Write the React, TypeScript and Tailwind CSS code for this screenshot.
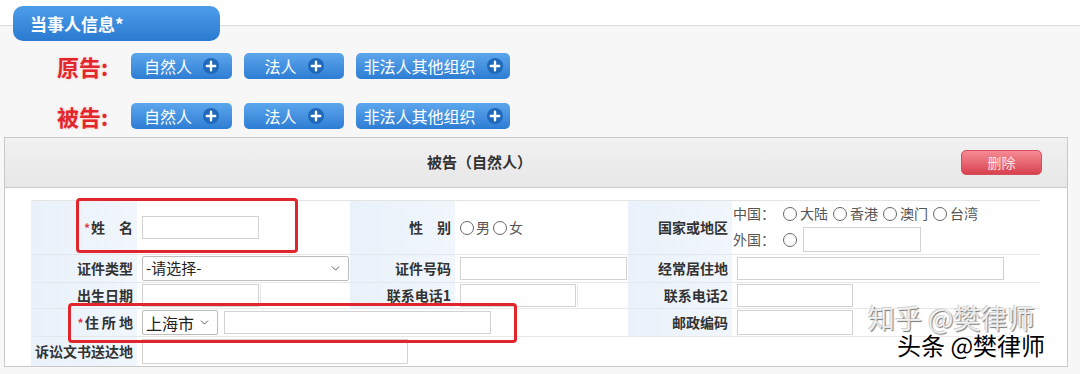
import { ChevronDown } from "lucide-react";

const FONT = "font-['Noto_Sans_CJK_SC','Noto_Sans',sans-serif]";

function PlusDot() {
  return (
    <svg width="16" height="16" viewBox="0 0 16 16" className="shrink-0">
      <circle cx="8" cy="8" r="8" fill="#1f68ba" />
      <path d="M8 3.8v8.4M3.8 8h8.4" stroke="#fff" strokeWidth="2.4" strokeLinecap="round" />
    </svg>
  );
}

function AddButton({ label, width }: { label: string; width: string }) {
  return (
    <div
      className={`${width} flex h-[26px] items-center justify-center gap-[11px] rounded-[5px] bg-gradient-to-b from-[#5ca6ec] to-[#2d7dd4] text-[16px] text-white`}
    >
      <span>{label}</span>
      <PlusDot />
    </div>
  );
}

function PartyRow({ title }: { title: string }) {
  return (
    <div className="flex h-[26px] items-center">
      <div className="ml-[57px] w-[74px] text-[22px] font-bold leading-none text-[#e3262c] [text-shadow:0_0_3px_#f6c4c4]">
        {title}
      </div>
      <div className="flex gap-[12px]">
        <AddButton label="自然人" width="w-[101px]" />
        <AddButton label="法人" width="w-[100px]" />
        <AddButton label="非法人其他组织" width="w-[154px]" />
      </div>
    </div>
  );
}

function Label({ children, last }: { children: React.ReactNode; last?: boolean }) {
  return (
    <div
      className={`flex items-center justify-end border-b border-[#e4e8ee] bg-gradient-to-r from-[#e9f1fa] to-[#f1f6fc] pr-[4px] text-[14px] font-bold text-[#333] ${last ? "border-b-0" : ""}`}
    >
      {children}
    </div>
  );
}

function Cell({ children, span, last }: { children?: React.ReactNode; span?: string; last?: boolean }) {
  return (
    <div className={`flex items-center gap-[1px] border-b border-[#e8e8e8] pl-[5px] ${span ?? ""} ${last ? "border-b-0" : ""}`}>
      {children}
    </div>
  );
}

function Input({ width, height = "h-[23px]" }: { width: string; height?: string }) {
  return <div className={`${width} ${height} border border-[#d2d2d2] bg-white`} />;
}

function Ghost({ width }: { width: string }) {
  return <div className={`${width} h-[23px] border-l border-[#e6e6e6]`} />;
}

function Radio({ text, wide }: { text?: string; wide?: boolean }) {
  return (
    <span className={`flex items-center ${wide ? "gap-[3px]" : "gap-[2px]"}`}>
      <span className="h-[14px] w-[14px] rounded-full border border-[#666] bg-white" />
      {text && <span className={wide ? "mr-[5px]" : "mr-[2px]"}>{text}</span>}
    </span>
  );
}

function Select({ text, width, textSize }: { text: string; width: string; textSize: string }) {
  return (
    <div
      className={`${width} flex h-[25px] items-center justify-between rounded-[2px] border border-[#bdbdbd] bg-white pl-[3px] pr-[6px] ${textSize} text-[#222]`}
    >
      <span>{text}</span>
      <ChevronDown size={13} strokeWidth={1.6} color="#444" />
    </div>
  );
}

const Star = () => <span className="mr-[1px] text-[12px] text-[#e0394a]">*</span>;

export default function App() {
  return (
    <div className={`relative h-[374px] w-[1080px] overflow-hidden bg-[#f7f7f7] ${FONT}`}>
      <div className="h-[26px] border-b border-[#dcdcdc] bg-white pl-[13px] pt-[6px]">
        <div className="relative z-10 flex h-[35px] w-[207px] items-center rounded-[10px] bg-gradient-to-b from-[#4c9de8] to-[#2a7bd1] pl-[17px] text-[17px] font-bold text-white">
          当事人信息*
        </div>
      </div>

      <div className="mt-[27px] flex flex-col gap-[24px]">
        <PartyRow title="原告:" />
        <PartyRow title="被告:" />
      </div>

      <div className="ml-[4px] mt-[8px] w-[1064px] border border-[#c9c9c9] bg-white">
        <div className="flex h-[50px] items-center border-b border-[#c9c9c9] bg-gradient-to-b from-[#f1f1f1] to-[#e7e7e7]">
          <div className="pl-[422px] text-[15px] font-bold text-[#333]">被告（自然人）</div>
          <div className="ml-auto mr-[25px] flex h-[25px] w-[81px] items-center justify-center rounded-[5px] border border-[#d3505c] bg-gradient-to-b from-[#f58a95] to-[#d8404f] text-[14px] text-[#fde4e8]">
            删除
          </div>
        </div>

        <div className="pl-[26px] pt-[12px]">
          <div className="grid w-[1009px] grid-cols-[106px_213px_105px_173px_104px_308px] grid-rows-[54px_28px_26px_28px_29px] border-t border-[#e4e4e4] text-[14px] text-[#555]">
            {/* row 1 */}
            <Label>
              <Star />
              姓　名
            </Label>
            <Cell>
              <Input width="w-[117px]" />
            </Cell>
            <Label>性　别</Label>
            <Cell>
              <Radio text="男" />
              <Radio text="女" />
            </Cell>
            <Label>国家或地区</Label>
            <div className="flex flex-col justify-center gap-[3px] border-b border-[#e8e8e8] pl-[1px] text-[14px] text-[#555]">
              <div className="flex items-center">
                <span className="mr-[8px]">中国：</span>
                <Radio text="大陆" wide />
                <Radio text="香港" wide />
                <Radio text="澳门" wide />
                <Radio text="台湾" wide />
              </div>
              <div className="flex items-center">
                <span className="mr-[8px]">外国：</span>
                <Radio />
                <div className="ml-[6px]">
                  <Input width="w-[118px]" height="h-[25px]" />
                </div>
              </div>
            </div>

            {/* row 2 */}
            <Label>证件类型</Label>
            <Cell>
              <Select text="-请选择-" width="w-[207px]" textSize="text-[15px]" />
            </Cell>
            <Label>证件号码</Label>
            <Cell>
              <Input width="w-[167px]" />
            </Cell>
            <Label>经常居住地</Label>
            <Cell>
              <Input width="w-[267px]" />
            </Cell>

            {/* row 3 */}
            <Label>出生日期</Label>
            <Cell>
              <Input width="w-[117px]" />
              <Ghost width="w-[88px]" />
            </Cell>
            <Label>联系电话1</Label>
            <Cell>
              <Input width="w-[116px]" />
              <Ghost width="w-[50px]" />
            </Cell>
            <Label>联系电话2</Label>
            <Cell>
              <Input width="w-[116px]" />
            </Cell>

            {/* row 4 */}
            <Label>
              <Star />住 所 地
            </Label>
            <Cell span="col-span-3 gap-[6px]">
              <Select text="上海市" width="w-[76px]" textSize="text-[16px]" />
              <Input width="w-[267px]" />
            </Cell>
            <Label>邮政编码</Label>
            <Cell>
              <Input width="w-[116px]" height="h-[25px]" />
            </Cell>

            {/* row 5 */}
            <Label last>诉讼文书送达地</Label>
            <Cell span="col-span-5" last>
              <Input width="w-[266px]" height="h-[25px]" />
            </Cell>
          </div>
        </div>
      </div>

      {/* annotation boxes */}
      <div className="absolute left-[76px] top-[198px] h-[55px] w-[222px] rounded-[4px] border-[3px] border-[#e0262c]" />
      <div className="absolute left-[68px] top-[303px] h-[40px] w-[449px] rounded-[4px] border-[3px] border-[#e0262c]" />

      {/* watermarks */}
      <div className="absolute left-[868px] top-[304px] whitespace-nowrap text-[27px] leading-none text-white/80 [text-shadow:1px_1px_1px_#7a7a7a,-1px_-1px_0_#d0d0d0]">
        知乎 @樊律师
      </div>
      <div className="absolute left-[897px] top-[333px] whitespace-nowrap text-[24px] leading-none text-black [text-shadow:1px_1px_0_#fff,-1px_-1px_0_#fff,1px_-1px_0_#fff,-1px_1px_0_#fff]">
        头条 @樊律师
      </div>
    </div>
  );
}
